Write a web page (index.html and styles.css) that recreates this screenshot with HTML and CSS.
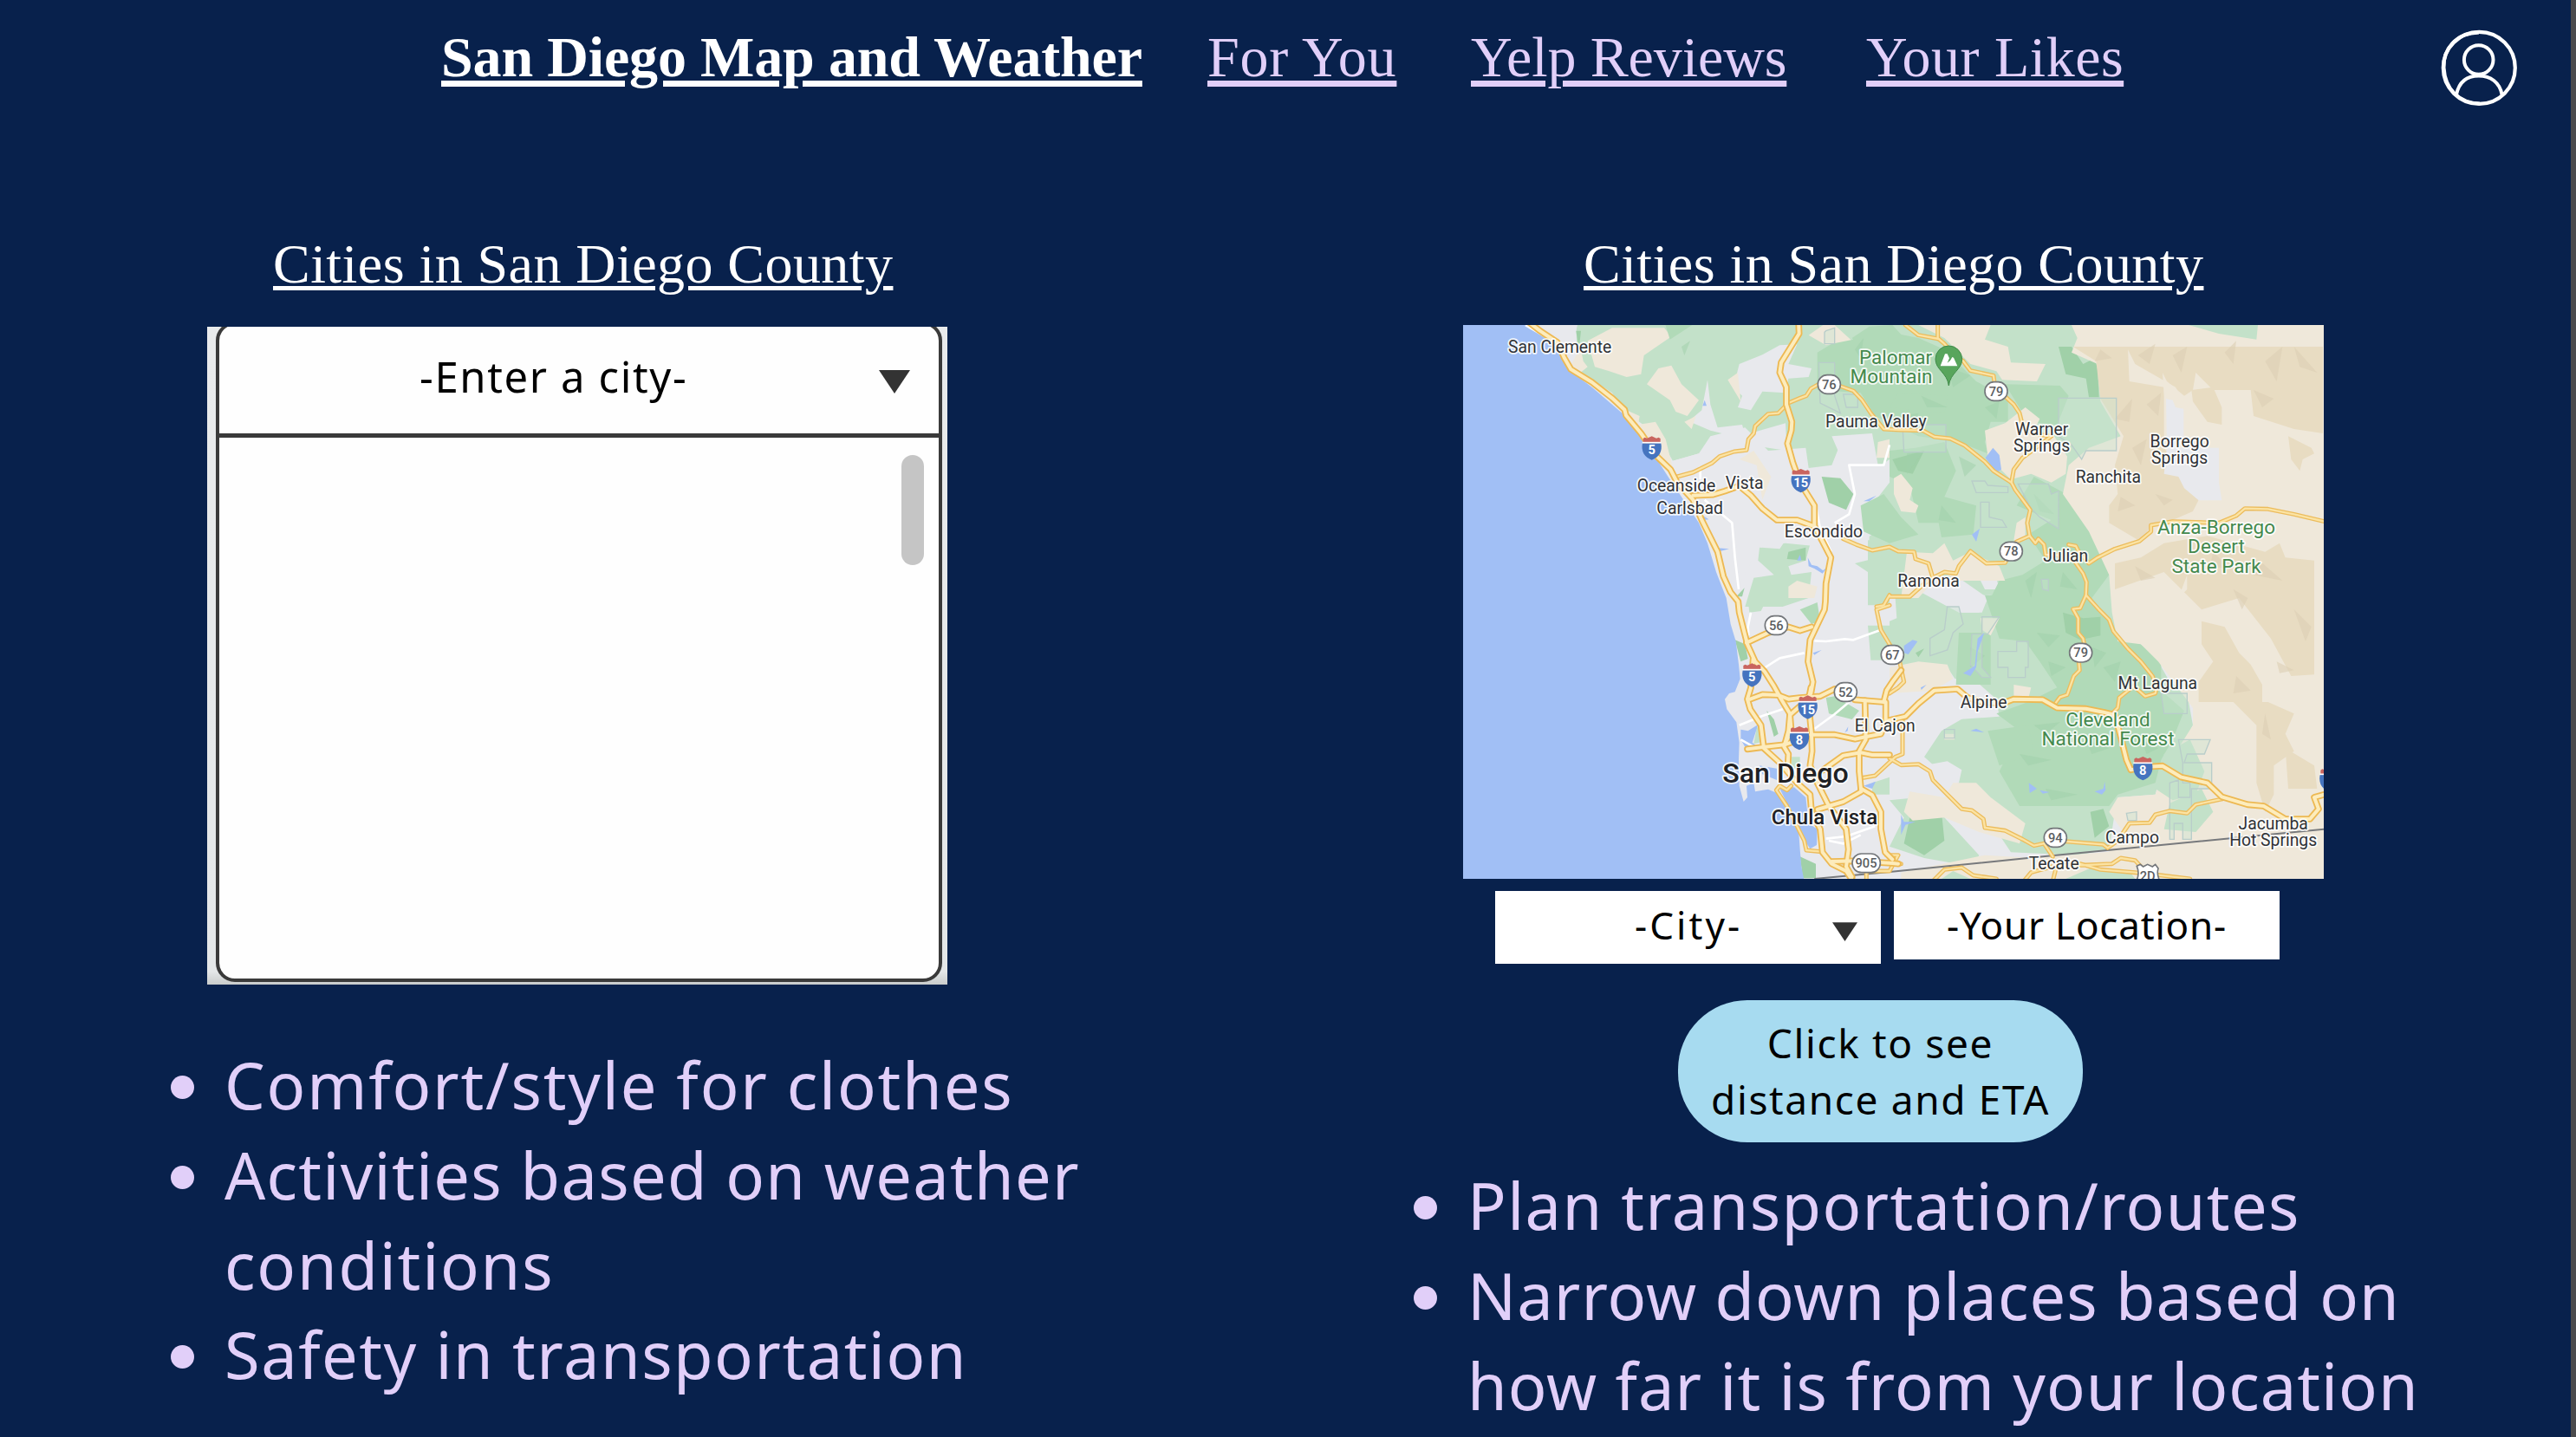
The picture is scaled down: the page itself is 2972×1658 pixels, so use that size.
FILE: index.html
```html
<!DOCTYPE html>
<html lang="en">
<head>
<meta charset="utf-8">
<title>San Diego Map and Weather</title>
<link rel="stylesheet" href="styles.css">
</head>
<body>
<header class="topbar">
  <nav class="nav">
    <a class="nav-link nav-current">San Diego Map and Weather</a>
    <a class="nav-link nav-foryou">For You</a>
    <a class="nav-link nav-yelp">Yelp Reviews</a>
    <a class="nav-link nav-likes">Your Likes</a>
  </nav>
  <svg class="profile" viewBox="0 0 90 90" fill="none" stroke="#fff">
    <circle cx="45.300" cy="45.300" r="41.500" stroke-width="4.200"/>
    <path d="M45 4.500C18 5 3.500 24 4.500 45C6 70 22 86 46 86.500" stroke-width="4"/>
    <circle cx="44.700" cy="36" r="16.800" stroke-width="4"/>
    <path d="M19 76C22 62 31 54.500 44.700 54.500S69 62 71.500 76" stroke-width="4"/>
  </svg>
</header>
<main class="columns">
  <section class="column column-left">
    <h2 class="heading">Cities in San Diego County</h2>
    <div class="picker">
      <div class="picker-frame">
        <div class="picker-head">
          <span class="picker-label">-Enter a city-</span>
          <svg class="arrow" viewBox="0 0 36 27"><path d="M0 0H36L18 27Z"/></svg>
        </div>
        <div class="picker-body"><div class="scroll-thumb"></div></div>
      </div>
    </div>
    <ul class="notes">
      <li><span class="line-clothes">Comfort/style for clothes</span></li>
      <li><span class="line-activities">Activities based on weather</span><span class="line-conditions">conditions</span></li>
      <li><span class="line-safety">Safety in transportation</span></li>
    </ul>
  </section>
  <section class="column column-right">
    <h2 class="heading">Cities in San Diego County</h2>
    <svg class="map" viewBox="24 15 2979 1917" preserveAspectRatio="none">
      <defs>
        <g id="motorways">
          <path d="M245,0L290,35 350,75 375,130 397,168 470,213 540,268 583,308 588,328 640,390 695,470 742,515 765,560 820,620 850,690 905,800 925,885 950,940 976,972 980,1010 1008,1120 1035,1180 1068,1215 1100,1265 1125,1310 1155,1360 1160,1420 1135,1470"/>
          <path d="M1028,1170L1020,1270 1008,1310 1018,1345 1055,1400 1065,1480 1120,1530 1180,1600 1225,1640 1230,1700 1260,1760 1268,1840 1300,1880 1350,1905 1370,1935"/>
          <path d="M1185,0L1187,45 1125,145 1120,180 1143,230 1143,290 1162,350 1160,380 1147,425 1165,490 1190,560 1240,640 1240,710 1297,820 1280,910 1278,972 1275,1000 1225,1105 1218,1180 1235,1250 1228,1290 1195,1330 1155,1365 1150,1420 1135,1475 1150,1500 1148,1540"/>
          <path d="M1228,1270L1220,1310 1225,1380 1230,1430 1232,1490 1225,1540 1250,1600 1290,1680 1350,1760 1358,1830 1350,1890 1370,1925"/>
          <path d="M820,605L890,602 930,590 980,572 1020,605 1060,650 1110,690 1180,690 1240,712"/>
          <path d="M1008,1483L1070,1475 1135,1468 1190,1450 M1228,1433L1310,1433 1380,1448 1420,1440 1470,1430 1490,1385 1555,1370 1600,1325 1655,1280 1735,1275 1770,1305 1820,1320 1890,1325 1930,1310 2030,1312 2080,1340 2180,1343 2240,1355 2280,1365 2300,1440 2320,1520 2335,1555 2380,1545 2445,1541 2510,1580 2600,1600 2650,1648 2740,1675 2795,1680 2870,1725 2955,1725 2985,1690 2970,1650 3005,1640"/>
          <path d="M1018,1310L1060,1294 1115,1296 1150,1310 1190,1305 1260,1300 1310,1275"/>
          <path d="M1380,1312L1480,1320 1490,1280 1510,1250 1540,1210"/>
          <path d="M1415,1315L1418,1450 1395,1490 1395,1560 1402,1630 1340,1665 1250,1692"/>
          <path d="M1270,1555L1340,1505 1400,1495 1440,1503 1500,1503"/>
          <path d="M1402,1620L1440,1642 1470,1700 1470,1760 1485,1840 1510,1865"/>
          <path d="M1300,1872L1380,1870 1510,1878 1530,1880"/>
          <path d="M1005,1115L1080,1080 1150,1060 1190,1073 1230,1060"/>
          <path d="M1487,1320L1487,1385"/>
        </g>
        <g id="highways">
          <path d="M765,540L820,525 885,493 912,470 962,453 1005,448 1012,410 1030,390 1035,365 1080,323 1115,320 1150,285 1190,268 1212,260 1228,235 1255,220 1325,225 1375,243 1405,275 1435,320 1480,375 1535,378 1615,380 1655,402 1710,408 1760,432 1830,488 1860,520 1922,560 1935,585 1987,655 1977,700 1985,745 2005,770 2015,755 2035,775 2040,810 2090,812"/>
          <path d="M1555,15L1600,50 1670,63 1690,80 1725,120 1755,140 1780,173 1860,190 1865,230 1930,290 1950,320 1960,360 1990,390 2060,400 1960,475 1930,515 1922,560"/>
          <path d="M1667,15V62"/>
          <path d="M1340,755L1385,775 1440,795 1500,783 1530,798 1585,800 1590,825 1635,840 1650,890 1690,870 1730,875 1740,850 1780,798 1835,840 1900,838 1940,765 1985,745"/>
          <path d="M1500,955L1570,955 1620,910 1650,890 M1455,990L1480,985 1500,950"/>
          <path d="M2120,775L2145,780 2155,800 2190,840 2220,820 2280,790 2365,763 2405,730 2405,708 2480,695 2640,700 2700,675 2730,650 2810,652 2900,670 3005,695"/>
          <path d="M2135,825L2170,875 2182,905 2180,950 2225,1000 2260,1035 2275,1075 2325,1135 2370,1180 2410,1230 2425,1270 2420,1290 2385,1300 2345,1265 2295,1305 2290,1340 2270,1360"/>
          <path d="M2180,950L2160,995 2135,998 2153,1030 2153,1080 2170,1100 2180,1150 2155,1180 2158,1210 2138,1230 2115,1295 2090,1303 2070,1330"/>
          <path d="M1500,1515L1540,1538 1600,1535 1640,1560 1650,1590 1700,1640 1750,1690 1785,1695 1825,1725 1830,1755 1900,1765 1960,1795 2000,1817 2080,1800 2240,1813 2255,1825 2290,1800 2330,1740 2400,1738 2420,1710 2470,1697 2530,1705 2560,1675 2655,1655"/>
          <path d="M1500,985L1455,1000 1470,1070 1500,1120 1535,1180 1550,1250 1530,1270 1500,1290"/>
          <path d="M1545,1380L1545,1500 1520,1510 1450,1575 1410,1582"/>
          <path d="M1160,1610L1145,1625 1120,1610 1108,1625 1145,1680 1180,1750 1205,1800 1212,1833 1265,1838"/>
          <path d="M2035,1810L2065,1855 M1965,1940L1990,1910 2060,1890 2160,1880 2230,1900 2350,1910 2400,1915 2540,1932 M2160,1885L2270,1880 2300,1860 2350,1868 2370,1890 M2075,1900L2065,1940"/>
          <path d="M1420,1935V1905H1500L1530,1850 1490,1850 M1500,1880H1540 M1650,1940L1690,1900 1750,1893 1790,1920 1870,1932"/>
        </g>
        <g id="interstate">
          <path d="M-30-36L-24-40-16-37 0-44 16-37 24-40 30-36V-20H-30Z" fill="#c9655f"/>
          <path d="M-32-20H32C38 8 25 30 0 38C-25 30-38 8-32-20Z" fill="#4574bf"/>
          <path d="M-33-22H33" stroke="#fff" stroke-width="5"/>
        </g>
      </defs>

      <rect width="3020" height="1950" fill="#e8e9ed"/>

      <!-- coastal ranges and backcountry -->
      <path class="park" d="M415,0H1700V960H1425V750L1500,700 1410,600 1440,440 1340,400 1300,500 1220,510 1210,440 1080,450 1000,370 880,400 840,460 750,485 700,400 580,310 540,250 420,170Z"/>
      <path class="park" d="M1500,0H2450V960H1500Z"/>
      <path class="park" d="M1050,785L1120,790 1140,760 1230,755 1210,830 1150,850 1160,880 1230,870 1220,960 1130,990H1000L1030,890 1100,880 1045,830ZM1380,840L1500,810V985H1425V870ZM1010,965H1075L1055,1005 1015,1010Z"/>
      <path class="park" d="M1500,950H2290L2350,1120 2430,1180 2470,1250 2530,1290 2550,1400 2500,1500 2440,1560 2420,1640 2290,1650 2280,1700 2260,1830 2150,1850 1920,1840 1840,1720 1720,1600 1620,1510 1680,1420 1800,1350 1700,1200 1600,1210 1500,1180Z"/>
      <path class="park" d="M1425,1055H1510V1175H1435ZM1500,1660L1600,1650 1690,1720 1810,1850 1790,1890 1620,1860 1500,1820 1550,1720ZM2430,1540L2480,1500 2580,1530 2570,1640Z"/>

      <!-- towns and valleys -->
      <path class="urban" d="M1060,118L1120,85 1180,82 1150,150 1230,165 1220,195 1150,200 1140,250 1060,245 1020,310 975,300 990,260 960,230 980,150ZM820,335L850,310 870,205 880,290 905,370 990,360 1000,395 920,390 880,380 810,350Z"/>
      <path class="urban" d="M1035,385L1140,355 1145,450 1010,430ZM750,485L840,460 1000,450 1010,420 1090,500 1080,620 1160,640 1240,600 1370,660 1420,640 1400,600 1365,500 1470,500 1500,480 1500,560 1430,650 1430,760 1340,760 1240,780 1140,770 1050,780 940,990H900L760,560ZM300,15H420L400,90 350,70Z"/>
      <path class="urban" d="M1220,515H1350L1300,400 1440,390 1460,500 1370,520 1360,620 1300,600ZM1590,930L1650,880 1740,890 1840,960 1820,1010 1740,1010ZM1815,900L1870,890 1880,930 1830,930ZM2100,780L2150,800 2180,850 2120,850Z"/>
      <path class="desert" d="M455,70L540,25H720L745,55 650,120 640,185 590,195 530,175 480,160ZM660,220L700,165 745,155 780,220 840,275 800,330 760,315 740,275ZM790,350L830,330 815,375ZM940,205L975,180 985,280ZM980,480L1030,450 1090,540 1060,620 1040,500ZM590,310L635,330 630,360 690,350 725,410 750,510 700,480 640,390ZM395,160L430,90 440,140 455,160 430,180ZM1220,50L1270,15H1310L1370,70 1280,85ZM1150,920L1180,900 1250,920 1240,960H1150ZM1460,420L1500,410V475H1455Z"/>
      <path class="urban" d="M1500,960H1520L1525,1030 1500,1040ZM1500,1240L1600,1250 1650,1280 1720,1240H1790L1870,1310 1880,1370 1740,1380 1620,1410 1600,1480 1520,1520H1480ZM1560,1550L1700,1525 1750,1555 1740,1600 1690,1620 1630,1580ZM1720,950H1850L1810,1010 1740,1010Z"/>

      <!-- national forest -->
      <path class="forest" d="M720,0H840L740,65ZM1250,110L1300,80 1500,40 1600,60 1690,100 1800,210 1910,270 1910,350 1850,350 1830,420 1840,460 1740,420 1600,400 1450,330 1400,250 1250,240ZM1430,20L1510,15 1570,80 1430,130 1370,60Z"/>
      <path class="forest" d="M1500,450L1590,440 1690,420 1730,520 1690,610 1800,640 1790,740 1680,750 1670,700 1600,700 1570,570 1500,540ZM1400,640L1480,600 1540,680 1600,740 1500,770 1410,730ZM1900,220L2090,225 2120,260 2080,360 1980,350ZM2000,540L2130,610 2200,720 2260,880 2200,960H1850L1880,900 1960,880 2040,830 1980,740 2060,690 1940,640ZM1830,950L2060,960 2200,960 2300,1100 2370,1120 2440,1180 2440,1280 2520,1350 2480,1450 2440,1520 2420,1600 2290,1640 2260,1680H1950L1880,1560 1950,1420 1870,1360 1980,1320 2080,1270 2020,1180 1970,1110 1880,1100Z"/>
      <path class="forest" d="M1740,1080H1850V1260H1730ZM1190,1000L1250,975 1260,1040 1230,1050ZM1280,1305L1310,1300 1395,1350 1370,1380 1290,1360ZM1690,320L1500,300 1530,250 1700,260ZM1840,1420L1980,1400 2000,1500 1880,1540Z"/>
      <path class="grove" d="M2085,90H2130L2170,150 2210,130 2220,165 2225,265H2190L2180,200 2110,185ZM1265,540L1330,545 1375,600 1350,655 1290,630ZM1150,800L1210,785V830L1145,825ZM2100,1010L2170,1030 2230,1025V1090L2160,1105 2110,1080ZM1570,1720L1680,1700 1690,1800 1620,1850 1550,1810ZM2195,1700L2240,1690 2260,1750 2210,1790ZM965,1105L1000,1120 1010,1170 985,1180ZM1075,1350L1100,1380 1115,1430 1100,1440ZM1190,1855L1245,1880V1930H1200ZM415,35H432L425,100ZM970,955L998,925 990,955ZM1510,480L1620,450 1580,530 1530,520ZM1590,1150L1620,1135 1600,1165Z"/>
      <path class="park" d="M1030,1465L1040,1410 1055,1400 1050,1460ZM1160,1510H1190V1550H1160ZM1440,1600L1500,1580V1640H1440Z"/>

      <!-- desert -->
      <path class="desert" d="M1600,15H1850L1830,65 1910,90 1920,145 2040,150 2010,210 1890,205 1870,175 1780,150 1690,60ZM1830,380L1900,355 1970,300 2020,340 2000,380 2070,400 2115,470 2110,530 2060,560 1990,530 1920,550 1840,470ZM1515,545L1540,530 1580,580 1570,620 1600,640 1590,665 1540,660 1515,600ZM1560,800L1650,805 1690,770 1720,830 1780,800 1880,850 1900,900 1740,900 1680,870 1600,960H1540Z"/>
      <path class="desert" d="M2130,15H3010V1940H2380L2230,1890 2270,1820 2330,1800 2260,1700 2290,1650 2420,1640 2450,1560 2500,1480 2550,1400 2550,1340 2430,1180 2370,1120 2290,1110 2270,1010 2260,880 2190,730 2100,600 2120,500 2190,440 2300,400 2230,280 2220,150 2130,110 2150,60Z"/>
      <path class="desert" d="M1500,1200L1600,1180 1700,1190 1720,1240 1650,1280 1500,1290ZM1550,1700L1570,1630 1690,1650 1720,1600 1800,1600 1850,1650 1970,1740 1950,1810 1810,1770 1690,1720 1580,1730ZM1540,1910L1830,1850 2000,1860 2300,1835V1940H1540ZM1815,1030H1880L1850,1090 1820,1070ZM1930,1260L1990,1270 1980,1310 1930,1310ZM1690,1430H1725V1450H1690ZM1940,700L1970,680V760L1930,760Z"/>
      <path class="park" d="M2535,15H2775L2770,65 2640,45ZM2110,1932L2200,1893 2330,1905 2350,1932ZM1680,1932L1720,1905 1780,1932ZM2450,1760L2470,1670 2580,1620 2620,1700 2560,1770ZM2420,1620L2450,1500 2540,1450 2590,1560 2560,1640 2480,1660Z"/>
      <path class="tan" d="M2135,90H3000V390L2900,375 2760,330 2750,240 2620,240 2560,180 2550,240 2520,260 2460,210 2445,180 2450,260V440L2540,560 2570,620 2550,660 2480,690 2405,710 2370,765 2260,700 2260,640 2290,600 2280,500 2310,400 2230,270 2215,140Z"/>
      <path class="tan" d="M2545,240L2620,230 2650,300V360L2600,350 2550,280ZM2880,400L2960,440 2970,460 2930,480 2920,520 2890,480ZM2280,840L2370,820 2450,770 2600,745 2800,800 2850,770 2870,820 2970,830V1225L2890,1230 2820,1100 2710,960 2580,1000 2450,870 2280,930ZM2580,1040L2660,1060 2710,1150 2750,1190 2790,1260V1320H2570V1250L2620,1180 2580,1120ZM2690,1320L2810,1320 2900,1360 2870,1430 2900,1490 2830,1540V1640L2800,1700 2770,1600V1400ZM2870,1480L2970,1540 2980,1620 2880,1620Z"/>
      <path class="desert" d="M2325,100L2350,150 2490,230 2550,330 2510,310 2450,230 2330,210ZM2285,930L2470,900 2580,1000 2480,1000 2350,960ZM2500,960L2530,880 2530,930 2500,960Z"/>
      <path class="shade" d="M2360,120L2420,80 2400,150ZM2280,340L2340,270 2330,350ZM2390,290L2440,250 2430,330ZM2800,140L2860,90 2840,210ZM2660,110L2700,70 2690,150ZM2900,90L2980,180 2920,160ZM2780,830L2860,900 2760,880ZM2340,440L2390,410 2370,500ZM2300,610L2350,640 2290,660ZM2420,600L2480,620 2450,640ZM2690,930L2740,960 2720,1000ZM2700,1230L2750,1280 2690,1290ZM2800,1360L2820,1450 2790,1430ZM2900,1000L2960,1060 2940,1110ZM2230,100L2270,130 2210,140ZM2480,120L2530,90 2510,180ZM2760,240L2830,270 2790,300ZM2350,850L2420,890 2370,900ZM2620,800L2680,860 2610,850ZM2840,1180L2900,1210 2850,1220Z"/>
      <path class="shade-green" d="M780,90L810,70 790,120ZM1380,100L1410,60 1400,130ZM1700,160L1780,190 1720,230ZM1610,260L1700,300 1630,300ZM2000,600L2070,670 2020,660ZM1740,470L1800,500 1760,540ZM2100,870L2150,930 2090,920ZM2010,1080L2090,1090 2050,1130ZM1950,1500L2060,1520 1980,1540ZM2180,1450L2260,1480 2200,1500ZM2240,1200L2300,1180 2280,1250ZM2040,1620L2150,1640 2060,1660ZM1680,640L1730,700 1670,690ZM1560,460L1620,450 1560,530ZM2370,1450L2430,1480 2390,1500ZM2000,1400L2090,1390 2040,1430ZM1970,900L2010,870 1990,960ZM2200,1130L2250,1150 2210,1200ZM2050,1180L2110,1200 2060,1230ZM1780,1130L1830,1160 1780,1200ZM1540,330L1600,320 1580,370ZM1830,300L1880,280 1870,340Z"/>
      <path class="urban" d="M2457,270L2480,275 2490,300 2518,305V400L2500,440H2640V560L2650,622H2570L2520,580 2500,540 2450,530 2460,440Z"/>
      <path class="reserve" d="M2085,268H2285V450H2180L2165,480 2130,430 2085,400ZM1785,555H1830L1840,570 1910,575V595H1800ZM1815,628H1845V680L1890,690 1905,715H1815ZM1945,565H2050L2060,600 2085,590V720L2020,680 1990,650ZM1280,35L1310,25V80H1275V40ZM1255,145H1310V260L1330,320 1260,285ZM1545,360H1695V455H1550ZM1340,255H1390V300H1350ZM1640,1100L1690,1070 1700,990H1740L1755,1050 1720,1080 1700,1140 1640,1160ZM1785,1085H1840L1880,1025 1820,1025V1200L1850,1235H1820L1780,1190ZM1875,1145H1940V1110H1980V1200H1970V1235H1910V1200H1875ZM2440,1290H2530V1360H2450ZM2500,1450H2610L2590,1500H2530L2520,1530H2615V1620H2545V1795H2515V1740H2485V1795H2470V1600L2500,1590V1650H2540V1600H2515V1530ZM2320,1705L2355,1700V1730H2325ZM1690,1415H1725V1445H1690ZM2025,895H2050V935L2030,930Z"/>

      <!-- ocean, bays and lakes -->
      <path class="water" d="M0,0H245L350,85 390,170 470,230 580,325 640,405 695,480 740,550 800,640 840,700 870,770 900,870 935,960 950,1050 968,1110 978,1190 983,1240 965,1285 945,1290 930,1310 937,1345 970,1390 980,1460 978,1520 980,1610 995,1665 1008,1650 1005,1610 1030,1600 1035,1630 1080,1622 1110,1635 1140,1680 1185,1760 1190,1830 1195,1890 1205,1940H0Z"/>
      <path class="water" d="M1120,1620L1170,1615 1210,1650 1220,1740 1250,1760 1248,1815 1225,1828 1207,1800 1180,1740ZM985,1415L1010,1420 1045,1398 1025,1460 1050,1480 1000,1475 985,1450ZM1050,1540L1110,1550V1590L1060,1570ZM845,670L875,688 855,690ZM885,785L945,790 905,800ZM1190,810L1180,830 1195,830ZM1217,820L1230,845 1250,850 1270,865 1288,850 1268,875 1240,858 1220,850ZM860,275L867,295H853ZM1832,475L1858,440 1880,465 1887,515 1870,525ZM1785,740L1812,720 1800,765ZM1410,625L1455,605 1430,625ZM1550,1125L1580,1105 1597,1110 1565,1155 1550,1150ZM1805,1100L1828,1080 1805,1145 1800,1200 1780,1230 1755,1220 1795,1195ZM1780,1420L1800,1412 1827,1425ZM1982,1600L2010,1620 1985,1635ZM2210,1630L2240,1620 2245,1595 2248,1625 2235,1640ZM2020,1625L2055,1632 2030,1637ZM1540,1710L1550,1735 1590,1735 1555,1745 1540,1780ZM1235,1150L1265,1140 1240,1157ZM1410,1610L1452,1595 1440,1620ZM1345,1425L1357,1405 1355,1420ZM1608,1270L1628,1260 1610,1278Z"/>

      <!-- local roads and border -->
      <path class="local" d="M240,15L350,80M845,505V550M860,620L955,700 965,820 978,930M1500,430L1480,500 1360,500 1380,600 1360,670 1310,700M1245,640L1260,720 1298,800M1020,1010L1010,1060 1012,1090M1240,1108L1280,1110 1345,1102 1375,1105 1470,1070M1070,1200L1120,1168 1205,1150M980,1400L1060,1368 1130,1345M1240,1413L1310,1362 1360,1320M985,1450L1030,1475M1280,1793L1350,1785 1450,1750M1290,1800L1340,1810 1400,1780"/>
      <path class="border" d="M1240,1932L1500,1908 2000,1858 3005,1760"/>

      <use href="#highways" class="highway-casing"/>
      <use href="#highways" class="highway-core"/>
      <use href="#motorways" class="motorway-casing"/>
      <use href="#motorways" class="motorway-core"/>

      <!-- state route markers -->
      <g class="route-badge">
        <rect x="1252" y="188" width="78" height="65" rx="32"/><rect x="1830" y="212" width="78" height="65" rx="32"/>
        <rect x="1882" y="766" width="78" height="65" rx="32"/><rect x="1069" y="1022" width="78" height="65" rx="32"/>
        <rect x="1471" y="1124" width="78" height="65" rx="32"/><rect x="1309" y="1253" width="78" height="65" rx="32"/>
        <rect x="2123" y="1117" width="78" height="65" rx="32"/><rect x="2035" y="1757" width="78" height="65" rx="32"/>
        <rect x="1371" y="1845" width="97" height="65" rx="32"/>
        <path d="M2356,1888L2368,1882 2378,1890 2393,1882 2410,1890 2420,1882 2430,1896Q2424,1915 2434,1936H2356Q2366,1912 2356,1888Z"/>
      </g>
      <g class="route-text">
        <text x="1291" y="236">76</text><text x="1869" y="260">79</text><text x="1921" y="814">78</text>
        <text x="1108" y="1070">56</text><text x="1510" y="1172">67</text><text x="1348" y="1301">52</text>
        <text x="2162" y="1165">79</text><text x="2074" y="1805">94</text><text x="1419" y="1893">905</text><text x="2393" y="1937">2D</text>
      </g>
      <use href="#interstate" x="677" y="444"/><use href="#interstate" x="1193" y="557"/>
      <use href="#interstate" x="1024" y="1230"/><use href="#interstate" x="1217" y="1341"/>
      <use href="#interstate" x="1188" y="1448"/><use href="#interstate" x="2377" y="1553"/><use href="#interstate" x="3022" y="1592"/>
      <g class="shield-text">
        <text x="677" y="463">5</text><text x="1193" y="576">15</text><text x="1024" y="1249">5</text>
        <text x="1217" y="1361">15</text><text x="1188" y="1468">8</text><text x="2377" y="1573">8</text>
      </g>

      <!-- summit pin -->
      <path d="M1705,225C1700,180 1659,170 1659,133A46,46 0 0 1 1751,133C1751,170 1710,180 1705,225Z" fill="#58a55c" stroke="#3f8a48" stroke-width="3"/>
      <path d="M1676,157L1692,115H1700L1707,130 1700,146 1710,138 1717,126 1722,128 1735,157Z" fill="#fff"/>

      <g class="place">
        <text x="359" y="110">San Clemente</text><text x="1453" y="369">Pauma Valley</text>
        <text x="762" y="590">Oceanside</text><text x="998" y="583">Vista</text>
        <text x="809" y="669">Carlsbad</text><text x="1272" y="750">Escondido</text>
        <text x="2027" y="395">Warner</text><text x="2027" y="453">Springs</text>
        <text x="2504" y="437">Borrego</text><text x="2504" y="495">Springs</text>
        <text x="2257" y="562">Ranchita</text><text x="2110" y="833">Julian</text><text x="1635" y="920">Ramona</text>
        <text x="2428" y="1274">Mt Laguna</text><text x="1826" y="1340">Alpine</text><text x="1484" y="1423">El Cajon</text>
        <text x="2340" y="1809">Campo</text><text x="2828" y="1760">Jacumba</text><text x="2828" y="1817">Hot Springs</text>
        <text x="2069" y="1898">Tecate</text>
      </g>
      <g class="nature">
        <text x="1521" y="150">Palomar</text><text x="1506" y="215">Mountain</text>
        <text x="2631" y="739">Anza-Borrego</text><text x="2631" y="805">Desert</text><text x="2631" y="872">State Park</text>
        <text x="2256" y="1404">Cleveland</text><text x="2256" y="1471">National Forest</text>
      </g>
      <text class="city" x="1140" y="1598">San Diego</text>
      <text class="town" x="1275" y="1744">Chula Vista</text>
    </svg>
    <div class="selectors">
      <div class="select select-city">
        <span class="select-city-label">-City-</span>
        <svg class="arrow arrow-small" viewBox="0 0 36 27"><path d="M0 0H36L18 27Z"/></svg>
      </div>
      <div class="select select-location">-Your Location-</div>
    </div>
    <button class="eta">Click to see<br>distance and ETA</button>
    <ul class="notes notes-right">
      <li><span class="line-plan">Plan transportation/routes</span></li>
      <li><span class="line-narrow">Narrow down places based on</span><span class="line-far">how far it is from your location</span></li>
    </ul>
  </section>
</main>
</body>
</html>
```
FILE: styles.css
```css
* { box-sizing: border-box; }

body {
  margin: 0;
  height: 1658px;
  overflow: hidden;
  background: #08214c;
  border-right: 6px solid #4b4b4d;
  font-family: "Noto Sans", sans-serif;
}

/* header */
.topbar {
  display: flex;
  justify-content: space-between;
  height: 265px;
  padding: 26px 61px 0 509px;
}
.nav { display: flex; }
.nav-link {
  height: 80px;
  font: 66px/80px "Liberation Serif", serif;
  color: #e1cff9;
  text-decoration: underline;
  text-decoration-thickness: 7px;
  text-underline-offset: 5px;
  white-space: nowrap;
}
.nav-current { width: 884px; color: #fff; font-weight: 700; letter-spacing: -0.16px; }
.nav-foryou { width: 304px; letter-spacing: 0.8px; }
.nav-yelp { width: 456px; letter-spacing: -0.1px; }
.nav-likes { letter-spacing: 0.5px; }
.profile { width: 90px; height: 90px; margin-top: 7px; }

/* two columns */
.columns { display: flex; }
.column { display: flex; flex-direction: column; align-items: flex-start; }
.column-left { width: 1634px; padding-left: 239px; }
.column-right { padding-left: 54px; }
.heading {
  margin: 0 0 0 76px;
  font: 64px/80px "Liberation Serif", serif;
  letter-spacing: 0.44px;
  color: #fff;
  text-decoration: underline;
  text-decoration-thickness: 5px;
  text-underline-offset: 4px;
}
.column-right .heading { margin-left: 139px; }

/* city picker */
.picker {
  width: 854px;
  height: 759px;
  margin-top: 32px;
  padding: 0 6px 3px 10px;
  background: linear-gradient(#e9ebec, #e4e7e8 98%, #c9cccc);
  overflow: hidden;
}
.picker-frame {
  height: 762px;
  margin-top: -6px;
  border: 4px solid #3a3a3a;
  border-radius: 22px;
  background: #fefefe;
}
.picker-head {
  display: flex;
  align-items: center;
  justify-content: space-between;
  height: 130px;
  padding: 0 33px 0 231px;
  border-bottom: 5px solid #3a3a3a;
}
.picker-label { font-size: 49px; line-height: 70px; letter-spacing: 1.64px; margin-top: -7px; color: #000; }
.arrow { width: 36px; height: 27px; margin-top: 6px; fill: #333; }
.picker-body { display: flex; justify-content: flex-end; padding: 20px 17px 0 0; }
.scroll-thumb { width: 26px; height: 127px; border-radius: 13px; background: #c5c5c5; }

/* map */
.map { display: block; width: 993px; height: 639px; margin-top: 30px; }
.park { fill: #c3e1c9; }
.forest { fill: #b1dab8; }
.grove { fill: #a0d0a8; }
.desert { fill: #efe8da; }
.tan { fill: #e8dcc2; }
.urban { fill: #e8e9ed; }
.water { fill: #a1bff5; }
.shade { fill: #dccfb4; opacity: .6; }
.shade-green { fill: #9fcfaa; opacity: .5; }
.reserve { fill: #c8e4cf; fill-opacity: .4; stroke: #b9cdca; stroke-width: 4; }
.local { fill: none; stroke: #fff; stroke-width: 8; stroke-linejoin: round; }
.border { fill: none; stroke: #77797c; stroke-width: 6; }
.highway-casing, .highway-core, .motorway-casing, .motorway-core { fill: none; stroke-linecap: round; stroke-linejoin: round; }
.highway-casing { stroke: #ecbc5c; stroke-width: 15; }
.highway-core { stroke: #fbe3a3; stroke-width: 7; }
.motorway-casing { stroke: #edb953; stroke-width: 23; }
.motorway-core { stroke: #fdecbc; stroke-width: 12; }
.route-badge { fill: #fff; stroke: #74777b; stroke-width: 5; }
.map text { font-family: Roboto, sans-serif; text-anchor: middle; }
.route-text { font-size: 44px; font-weight: 500; fill: #5a5d61; }
.shield-text { font-size: 44px; font-weight: 700; fill: #fff; }
.place, .nature, .city, .town { stroke: #fff; stroke-opacity: .85; stroke-width: 11; stroke-linejoin: round; paint-order: stroke; }
.place { font-size: 58px; fill: #303236; }
.nature { font-size: 67.5px; fill: #44894d; }
.city { font-size: 96.5px; font-weight: 500; fill: #202124; }
.town { font-size: 72px; font-weight: 500; fill: #202124; }

/* selectors below the map */
.selectors { display: flex; align-items: flex-start; gap: 15px; margin: 14px 0 0 37px; }
.select {
  display: flex;
  justify-content: center;
  width: 445px;
  background: #fff;
  color: #000;
  font-size: 44px;
  line-height: 78px;
}
.select-city { height: 84px; justify-content: space-between; padding: 0 27px 0 161px; letter-spacing: 3.07px; }
.select-location { height: 79px; letter-spacing: 0.8px; }
.arrow-small { width: 29px; height: 22px; margin-top: 36px; }

.eta {
  width: 467px;
  height: 164px;
  margin: 42px 0 0 248px;
  padding: 0;
  border: 0;
  border-radius: 80px;
  background: #a7dbf0;
  color: #000;
  font: 46px/65px "Noto Sans", sans-serif;
  letter-spacing: 1.64px;
}

/* notes */
.notes {
  margin: 64px 0 0 -42px;
  padding: 0;
  list-style: none;
  font-size: 74px;
  line-height: 103.8px;
  color: #e1cff9;
  white-space: nowrap;
}
.notes li { display: grid; grid-template-columns: 27px auto; column-gap: 35px; }
.notes li::before {
  content: "";
  width: 27px;
  height: 27px;
  margin-top: 41px;
  border-radius: 50%;
  background: #e1cff9;
}
.notes li span { grid-column: 2; }
.notes-right { margin: 21px 0 0 -57px; }
.line-clothes { letter-spacing: 1.83px; }
.line-activities { letter-spacing: 1.28px; }
.line-conditions { letter-spacing: 1.8px; }
.line-safety { letter-spacing: 1.5px; }
.line-plan { letter-spacing: 1.37px; }
.line-narrow { letter-spacing: 1.05px; }
.line-far { letter-spacing: 1.02px; }
```
